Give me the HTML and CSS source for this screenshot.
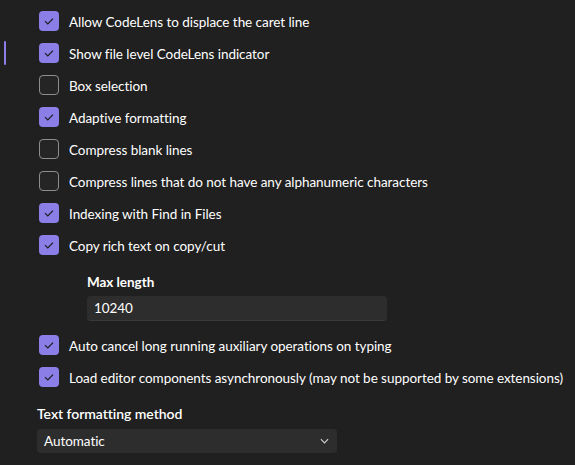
FILE: index.html
```html
<!DOCTYPE html>
<html lang="en">
<head>
<meta charset="utf-8">
<title>Settings</title>
<link rel="stylesheet" href="styles.css">
</head>
<body>
<div class="panel">
  <label class="row"><span class="box on"><svg viewBox="0 0 20 20"><path d="M6 10.2 L8.8 13 L14 7.6"/></svg></span><span class="txt">Allow CodeLens to displace the caret line</span></label>
  <label class="row focused"><span class="bar"></span><span class="box on"><svg viewBox="0 0 20 20"><path d="M6 10.2 L8.8 13 L14 7.6"/></svg></span><span class="txt">Show file level CodeLens indicator</span></label>
  <label class="row"><span class="box"></span><span class="txt">Box selection</span></label>
  <label class="row"><span class="box on"><svg viewBox="0 0 20 20"><path d="M6 10.2 L8.8 13 L14 7.6"/></svg></span><span class="txt">Adaptive formatting</span></label>
  <label class="row"><span class="box"></span><span class="txt">Compress blank lines</span></label>
  <label class="row"><span class="box"></span><span class="txt">Compress lines that do not have any alphanumeric characters</span></label>
  <label class="row"><span class="box on"><svg viewBox="0 0 20 20"><path d="M6 10.2 L8.8 13 L14 7.6"/></svg></span><span class="txt">Indexing with Find in Files</span></label>
  <label class="row"><span class="box on"><svg viewBox="0 0 20 20"><path d="M6 10.2 L8.8 13 L14 7.6"/></svg></span><span class="txt">Copy rich text on copy/cut</span></label>
  <div class="sub">
    <div class="sublabel">Max length</div>
    <div class="input">10240</div>
  </div>
  <label class="row"><span class="box on"><svg viewBox="0 0 20 20"><path d="M6 10.2 L8.8 13 L14 7.6"/></svg></span><span class="txt">Auto cancel long running auxiliary operations on typing</span></label>
  <label class="row"><span class="box on"><svg viewBox="0 0 20 20"><path d="M6 10.2 L8.8 13 L14 7.6"/></svg></span><span class="txt">Load editor components asynchronously (may not be supported by some extensions)</span></label>
  <div class="field">
    <div class="fieldlabel">Text formatting method</div>
    <div class="select"><span>Automatic</span><svg class="chev" viewBox="0 0 10 6"><path d="M1 1 L5 5 L9 1"/></svg></div>
  </div>
</div>
</body>
</html>
```
FILE: styles.css
```css
html, body {
  margin: 0;
  padding: 0;
  background: #202020;
  height: 100%;
}
body {
  font-family: "Segoe UI", Lato, "Open Sans", sans-serif;
  font-size: 13.5px;
  letter-spacing: -0.05px;
  color: #ffffff;
  overflow: hidden;
}
.panel {
  padding: 5px 0 0 37px;
  display: flex;
  flex-direction: column;
}
.row {
  position: relative;
  height: 32px;
  display: flex;
  align-items: center;
  white-space: nowrap;
}
.bar {
  position: absolute;
  left: -33px;
  top: 4px;
  width: 2px;
  height: 24px;
  border-radius: 1px;
  background: #8b7ee6;
}
.box {
  width: 20px;
  height: 20px;
  margin-left: 2px;
  box-sizing: border-box;
  border-radius: 4px;
  border: 1px solid #8d8d8d;
  background: #252525;
  flex: none;
  display: flex;
}
.box.on {
  border: none;
  background: #8b7ee6;
}
.box svg {
  width: 20px;
  height: 20px;
}
.box path {
  fill: none;
  stroke: #1c1c1c;
  stroke-width: 1.2;
}
.txt {
  margin-left: 10px;
  line-height: 20px;
  padding-top: 1px;
}
.sub {
  padding-left: 50px;
  margin-top: 11px;
  margin-bottom: 8px;
  display: flex;
  flex-direction: column;
  gap: 4px;
}
.sublabel {
  font-weight: 700;
  line-height: 20px;
}
.input {
  width: 300px;
  height: 25px;
  box-sizing: border-box;
  background: #2d2d2d;
  border-radius: 4px;
  border-bottom: 1px solid #3a3a3a;
  padding-left: 7px;
  line-height: 24px;
}
.field {
  margin-top: 10px;
  display: flex;
  flex-direction: column;
  gap: 5px;
}
.fieldlabel {
  font-size: 14px;
  font-weight: 600;
  line-height: 20px;
  padding-top: 1px;
}
.select {
  width: 300px;
  height: 24px;
  box-sizing: border-box;
  background: #2d2d2d;
  border-radius: 4px;
  display: flex;
  align-items: center;
  justify-content: space-between;
  padding: 0 8px 0 7px;
}
.chev {
  width: 9px;
  height: 6px;
}
.chev path {
  fill: none;
  stroke: #cfcfcf;
  stroke-width: 1.3;
}
```
